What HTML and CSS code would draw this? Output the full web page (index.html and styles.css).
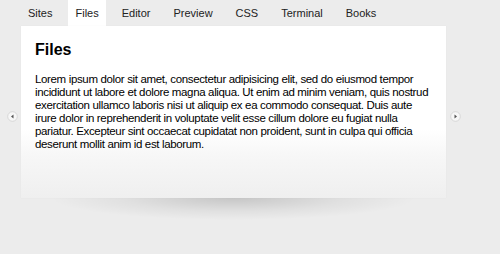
FILE: index.html
```html
<!DOCTYPE html>
<html>
<head>
<meta charset="utf-8">
<link rel="stylesheet" href="styles.css">
</head>
<body>
<nav class="tabs">
  <a class="tab">Sites</a>
  <a class="tab active">Files</a>
  <a class="tab">Editor</a>
  <a class="tab">Preview</a>
  <a class="tab">CSS</a>
  <a class="tab">Terminal</a>
  <a class="tab">Books</a>
</nav>
<div class="stage">
  <button class="arrow arrow-left" aria-label="Previous">
    <svg width="11" height="11" viewBox="0 0 11 11"><circle cx="5.5" cy="5.5" r="4.8" fill="#f7f7f7" stroke="#d0d0d0" stroke-width="0.8"/><path d="M6.5 3.5 L4 5.5 L6.5 7.5 Z" fill="#555"/></svg>
  </button>
  <div class="column">
    <section class="panel">
      <h1>Files</h1>
      <p>Lorem ipsum dolor sit amet, consectetur adipisicing elit, sed do eiusmod tempor incididunt ut labore et dolore magna aliqua. Ut enim ad minim veniam, quis nostrud exercitation ullamco laboris nisi ut aliquip ex ea commodo consequat. Duis aute irure dolor in reprehenderit in voluptate velit esse cillum dolore eu fugiat nulla pariatur. Excepteur sint occaecat cupidatat non proident, sunt in culpa qui officia deserunt mollit anim id est laborum.</p>
    </section>
    <div class="shadow"></div>
  </div>
  <button class="arrow arrow-right" aria-label="Next">
    <svg width="11" height="11" viewBox="0 0 11 11"><circle cx="5.5" cy="5.5" r="4.8" fill="#f7f7f7" stroke="#d0d0d0" stroke-width="0.8"/><path d="M4.5 3.5 L7 5.5 L4.5 7.5 Z" fill="#555"/></svg>
  </button>
</div>
</body>
</html>
```
FILE: styles.css
```css
html, body {
  margin: 0;
  padding: 0;
  background: #ececec;
  font-family: "Liberation Sans", Arial, sans-serif;
  color: #111;
}
.tabs {
  display: flex;
  gap: 8px;
  padding-left: 20.5px;
  height: 26px;
}
.tab {
  display: block;
  padding: 0 7.5px;
  line-height: 27px;
  font-size: 11px;
  color: #222;
}
.tab.active {
  background: #fff;
}
.stage {
  display: flex;
  align-items: flex-start;
}
.arrow {
  border: 0;
  padding: 0;
  background: none;
  margin-top: 85px;
  width: 11px;
  height: 11px;
  display: block;
}
.arrow svg { display: block; }
.arrow-left { margin-left: 7px; margin-right: 3px; }
.arrow-right { margin-left: 4px; }
.column {
  width: 425px;
}
.panel {
  height: 172px;
  box-sizing: border-box;
  padding: 14px 12px 0 14px;
  background: linear-gradient(to bottom, #ffffff 0%, #ffffff 60%, #f7f7f7 75%, #efefef 100%);
  box-shadow: 0 0 1px rgba(0,0,0,0.05);
}
.panel h1 {
  margin: 0 0 13px 0;
  font-size: 16px;
  line-height: 20px;
  font-weight: bold;
  color: #000;
}
.panel p {
  margin: 0;
  font-size: 11.5px;
  letter-spacing: -0.35px;
  line-height: 13px;
  color: #000;
}
.shadow {
  height: 22px;
  margin: 0 30px;
  background: radial-gradient(ellipse 50% 100% at 50% 0%, rgba(0,0,0,0.16), rgba(0,0,0,0.05) 60%, rgba(0,0,0,0) 100%);
}
```
